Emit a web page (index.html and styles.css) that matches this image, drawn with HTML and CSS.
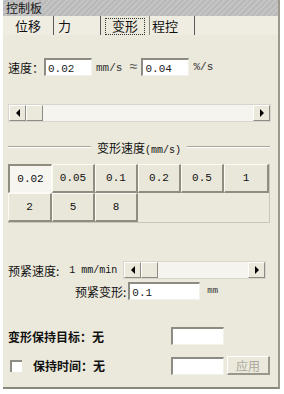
FILE: index.html
```html
<!DOCTYPE html>
<html lang="zh-CN">
<head>
  <meta charset="UTF-8" />
  <title>控制板</title>
  <link rel="stylesheet" href="styles.css">
</head>
<body>
  <div class="panel">
    <div class="titlebar">控制板</div>

    <div class="tabs">
      <div class="tab">位移</div>
      <div class="tab">力</div>
      <div class="tab active"><span class="focus">变形</span></div>
      <div class="tab">程控</div>
    </div>

    <div class="content">
      <div class="row speed-row">
        <span class="label">速度：</span>
        <span class="field w48 mono">0.02</span>
        <span class="unit mono">mm/s <span class="approx">≈</span></span>
        <span class="field w48 mono">0.04</span>
        <span class="unit mono">%/s</span>
      </div>

      <div class="scrollbar main-scroll">
        <div class="sb-btn"><span class="tri left"></span></div>
        <div class="sb-thumb"></div>
        <div class="sb-track"></div>
        <div class="sb-btn"><span class="tri right"></span></div>
      </div>

      <div class="group-title"><span>变形速度<span class="mono small">(mm/s)</span></span></div>

      <div class="speed-grid mono">
        <div class="cell pressed">0.02</div>
        <div class="cell">0.05</div>
        <div class="cell">0.1</div>
        <div class="cell">0.2</div>
        <div class="cell">0.5</div>
        <div class="cell">1</div>
        <div class="cell">2</div>
        <div class="cell">5</div>
        <div class="cell">8</div>
      </div>

      <div class="row pre-row">
        <span class="label">预紧速度:</span>
        <span class="pre-val mono">1 mm/min</span>
        <div class="scrollbar pre-scroll">
          <div class="sb-btn"><span class="tri left"></span></div>
          <div class="sb-thumb"></div>
          <div class="sb-track"></div>
          <div class="sb-btn"><span class="tri right"></span></div>
        </div>
      </div>

      <div class="row deform-row">
        <span class="label">预紧变形:</span>
        <span class="field w72 mono">0.1</span>
        <span class="unit mono tiny">mm</span>
      </div>

      <div class="row hold-row">
        <span class="label hold-label">变形保持目标：无</span>
        <span class="field w52"></span>
      </div>

      <div class="row time-row">
        <span class="check"></span>
        <span class="label time-label">保持时间：无</span>
        <span class="field w52"></span>
        <span class="apply">应用</span>
      </div>
    </div>
  </div>
</body>
</html>
```

FILE: styles.css
```css
body {
  margin: 0;
  background: #fff;
  font-family: "Noto Sans CJK SC", sans-serif;
  font-size: 12px;
  color: #111;
}

.mono {
  font-family: "Liberation Mono", "Noto Sans CJK SC", monospace;
  font-size: 11px;
}

.panel {
  margin-left: 3px;
  width: 275px;
  height: 387px;
  background: #ebe9db;
  border-right: 2px solid #9c9a8c;
  border-bottom: 2px solid #8a887c;
  display: flex;
  flex-direction: column;
}

.titlebar {
  height: 16px;
  line-height: 16px;
  padding-left: 3px;
  background: repeating-linear-gradient(135deg, #c4c4c4 0, #c4c4c4 2px, #b9b9b9 2px, #b9b9b9 4px);
  color: #1a1a1a;
  font-size: 12px;
}

/* Tabs */
.tabs {
  display: flex;
  height: 19px;
  background: #efede2;
}

.tab {
  width: 50px;
  text-align: center;
  line-height: 19px;
  font-size: 13px;
  border-right: 1px solid #5a5a5a;
  box-sizing: border-box;
}

.tab:nth-child(1) { width: 51px; }
.tab:nth-child(2) { width: 47px; text-align: left; padding-left: 4px; }
.tab.active { width: 49px; background: #ebe9db; border-right-color: #8a887c; }
.tab:nth-child(4) { width: 45px; text-align: left; padding-left: 2px; }

.focus {
  display: inline-block;
  line-height: 14px;
  padding: 0 6px 1px 6px;
  border: 1px dotted #333;
}

.content {
  padding: 0 8px 0 5px;
}

.row {
  display: flex;
  align-items: center;
}

.label {
  white-space: nowrap;
}

.field {
  display: inline-block;
  height: 18px;
  line-height: 18px;
  box-sizing: border-box;
  padding-left: 2px;
  background: #fff;
  border-top: 2px solid #8c8b84;
  border-left: 2px solid #8c8b84;
  border-right: 1px solid #f2f1ea;
  border-bottom: 1px solid #f2f1ea;
  color: #222;
}

.w48 { width: 48px; }
.w52 { width: 53px; }
.w72 { width: 72px; }

.unit {
  margin: 0 4px;
  color: #333;
}

.approx {
  font-size: 14px;
  color: #555;
}

.small { font-size: 10px; color: #111; }
.tiny { font-size: 9px; margin-left: 7px; }

/* Speed row */
.speed-row {
  margin-top: 23px;
}

/* Scrollbars */
.scrollbar {
  display: flex;
  height: 18px;
  background: #f5f4ef;
  border: 1px solid #d8d6cc;
  box-sizing: border-box;
}

.main-scroll {
  margin-top: 28px;
  width: 263px;
}

.sb-btn,
.sb-thumb {
  width: 17px;
  box-sizing: border-box;
  background: #ebe9db;
  border-top: 1px solid #fff;
  border-left: 1px solid #fff;
  border-right: 1px solid #8c8b84;
  border-bottom: 1px solid #8c8b84;
  display: flex;
  align-items: center;
  justify-content: center;
}

.sb-track {
  flex: 1;
}

.tri {
  width: 0;
  height: 0;
  border-top: 4px solid transparent;
  border-bottom: 4px solid transparent;
}

.tri.left { border-right: 4px solid #000; }
.tri.right { border-left: 4px solid #000; }

/* Group box heading */
.group-title {
  margin-top: 17px;
  display: flex;
  align-items: center;
  gap: 6px;
  height: 16px;
}

.group-title::before,
.group-title::after {
  content: "";
  flex: 1;
  border-top: 1px solid #a9a79b;
  border-bottom: 1px solid #fff;
}

.group-title > span {
  white-space: nowrap;
  color: #111;
}

/* Speed buttons */
.speed-grid {
  margin-top: 9px;
  width: 261px;
  display: grid;
  grid-template-columns: 44px 43px 43px 43px 43px 45px;
  grid-auto-rows: 29px;
  border-bottom: 1px solid #c9c7bb;
  border-right: 1px solid #c9c7bb;
  font-size: 11px;
}

.cell {
  display: flex;
  align-items: center;
  justify-content: center;
  box-sizing: border-box;
  background: #e9e7d9;
  border-top: 1px solid #fbfaf5;
  border-left: 1px solid #fbfaf5;
  border-right: 2px solid #8f8d80;
  border-bottom: 2px solid #8f8d80;
  color: #111;
}

.cell.pressed {
  background: #f6f5f0;
  border-top: 2px solid #8f8d80;
  border-left: 2px solid #8f8d80;
  border-right: 1px solid #fbfaf5;
  border-bottom: 1px solid #fbfaf5;
}

/* Pre-tension */
.pre-row {
  margin-top: 38px;
}

.pre-val {
  margin-left: 10px;
  width: 54px;
  font-size: 10px;
}

.pre-scroll {
  width: 143px;
}

.deform-row {
  margin-top: 3px;
  padding-left: 67px;
}

.deform-row .label {
  margin-right: 2px;
}

.hold-row {
  margin-top: 27px;
}

.hold-label {
  width: 163px;
  font-weight: bold;
}

.time-row {
  margin-top: 11px;
}

.check {
  width: 12px;
  height: 12px;
  margin-left: 2px;
  box-sizing: border-box;
  background: #fff;
  border-top: 2px solid #8c8b84;
  border-left: 2px solid #8c8b84;
}

.time-label {
  width: 138px;
  margin-left: 11px;
  font-weight: bold;
}

.apply {
  margin-left: 3px;
  width: 43px;
  height: 19px;
  line-height: 18px;
  text-align: center;
  box-sizing: border-box;
  color: #aaa89c;
  border-top: 1px solid #fff;
  border-left: 1px solid #fff;
  border-right: 2px solid #9a988c;
  border-bottom: 2px solid #9a988c;
}
```
